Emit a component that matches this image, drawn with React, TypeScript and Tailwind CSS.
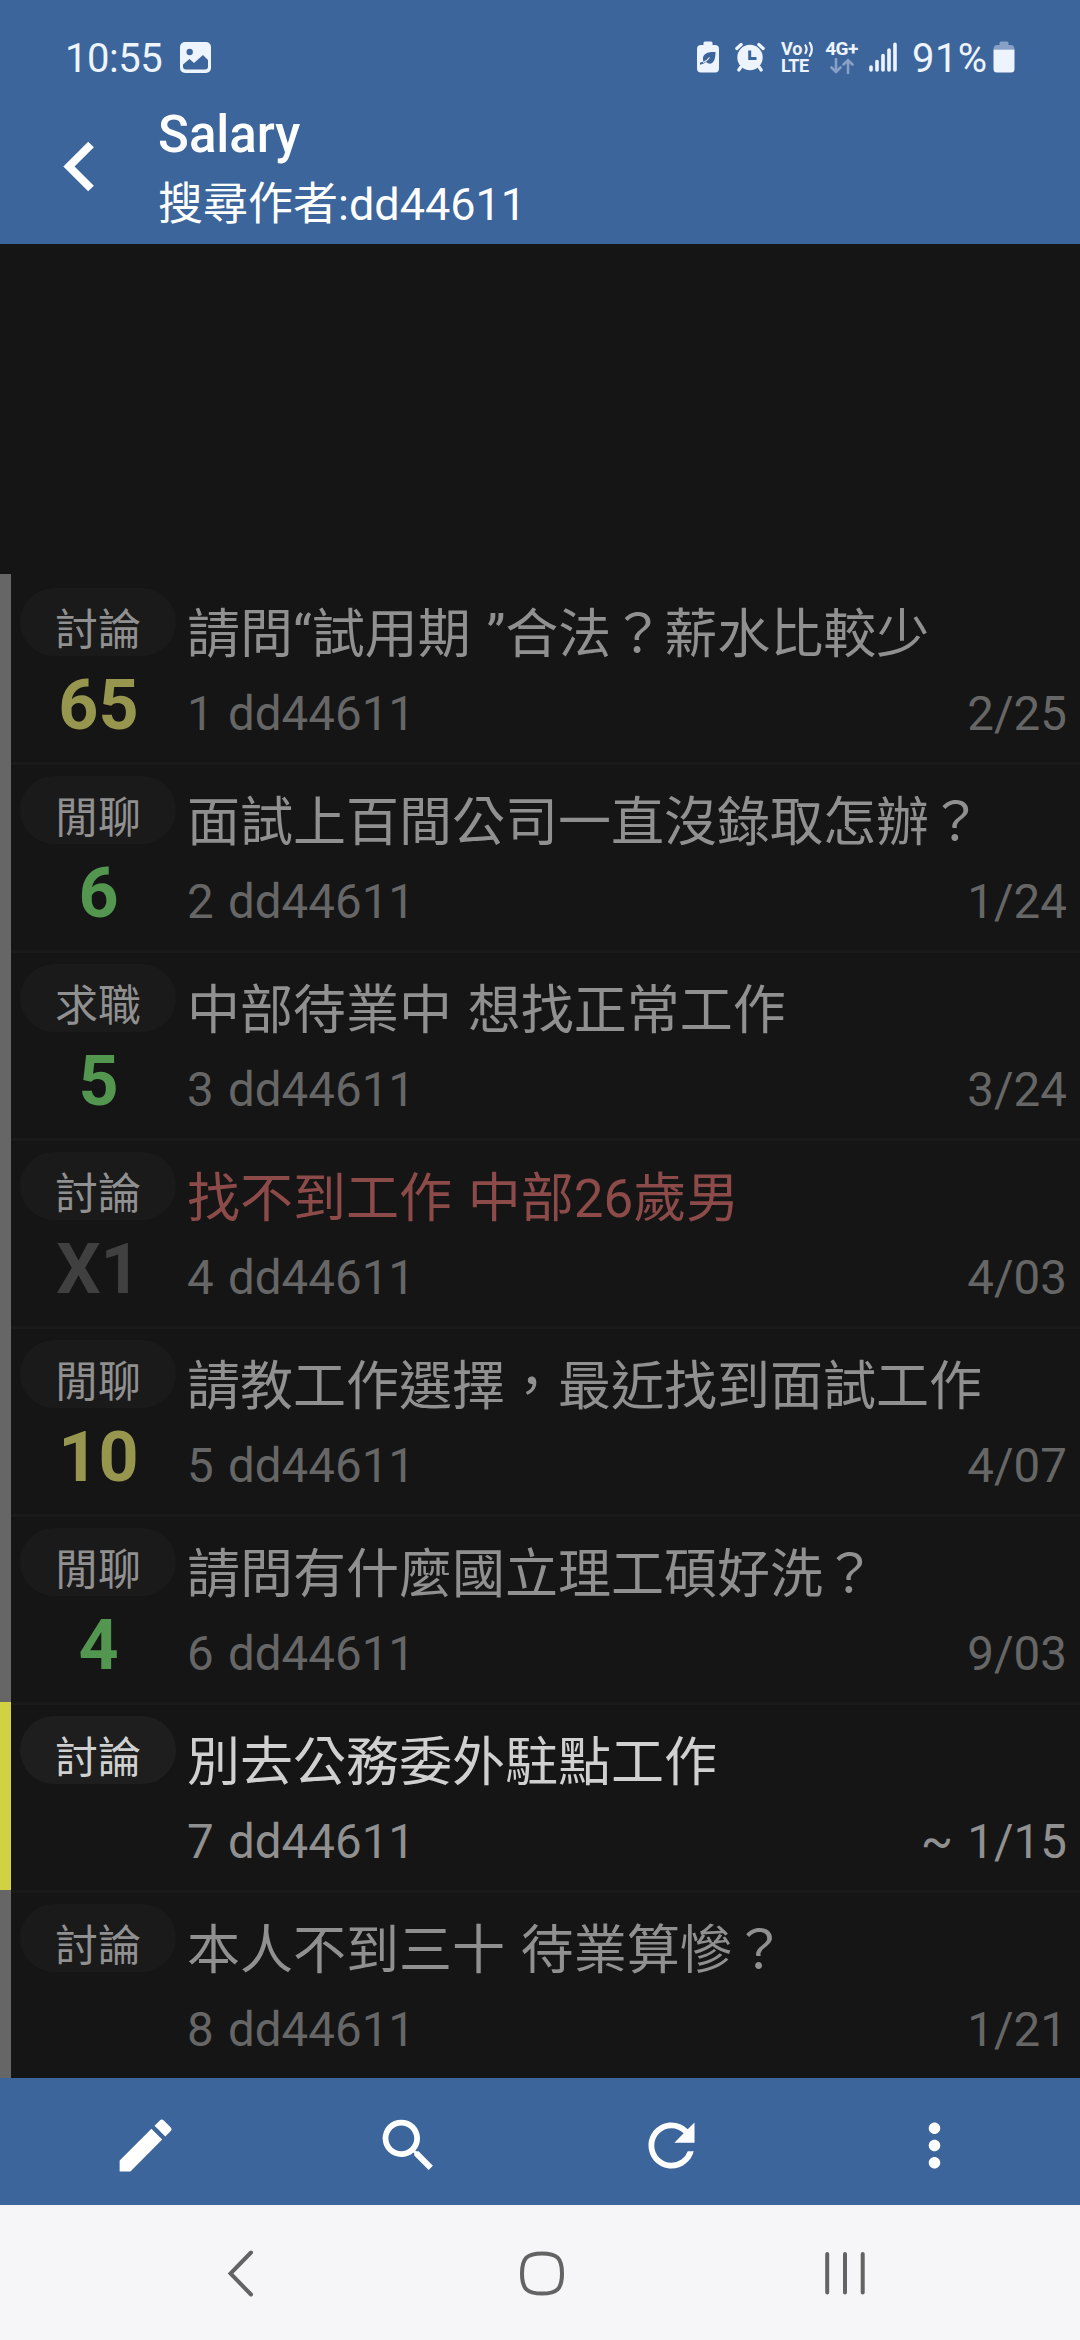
import { MdModeEdit, MdMoreVert, MdRefresh, MdSearch } from "react-icons/md";

type Post = {
  id: number;
  tag: string;
  title: string;
  date: string;
  score?: string;
  scoreClass?: string;
  titleClass?: string;
  active?: boolean;
};

const YELLOW = "text-[#96964f]";
const GREEN = "text-[#529650]";

const posts: Post[] = [
  { id: 1, tag: "討論", title: "請問“試用期 ”合法？薪水比較少", date: "2/25", score: "65", scoreClass: YELLOW },
  { id: 2, tag: "閒聊", title: "面試上百間公司一直沒錄取怎辦？", date: "1/24", score: "6", scoreClass: GREEN },
  { id: 3, tag: "求職", title: "中部待業中 想找正常工作", date: "3/24", score: "5", scoreClass: GREEN },
  { id: 4, tag: "討論", title: "找不到工作 中部26歲男", date: "4/03", score: "X1", scoreClass: "text-[#404040]", titleClass: "text-[#8c4a48]" },
  { id: 5, tag: "閒聊", title: "請教工作選擇，最近找到面試工作", date: "4/07", score: "10", scoreClass: YELLOW },
  { id: 6, tag: "閒聊", title: "請問有什麼國立理工碩好洗？", date: "9/03", score: "4", scoreClass: GREEN },
  { id: 7, tag: "討論", title: "別去公務委外駐點工作", date: "~ 1/15", active: true },
  { id: 8, tag: "討論", title: "本人不到三十 待業算慘？", date: "1/21" },
];

function StatusBar() {
  return (
    <div className="flex h-[114px] items-center pl-[65px] pr-[65px] text-[#eef4fd]">
      <span className="w-[115px] pt-[3px] text-[40px] leading-none tracking-[-0.5px]">10:55</span>
      <svg className="h-[31px] w-[31px]" viewBox="0 0 31 31">
        <rect width="31" height="31" rx="5" fill="currentColor" />
        <circle cx="9.7" cy="10" r="3.2" fill="#3c659b" />
        <path d="M3 22.5 9.5 17l4.5 4 9-8 5 5v6.5q0 3-3 3H6q-3 0-3-3z" fill="#3c659b" />
      </svg>
      <div className="ml-auto flex items-center">
        <svg className="h-[32px] w-[22px]" viewBox="0 0 22 32">
          <path d="M6.5 4V2q0-1.500 1.500-1.500h6q1.500 0 1.500 1.500v2H18q4 0 4 4v19.500q0 4-4 4H4q-4 0-4-4V8q0-4 4-4z" fill="currentColor" />
          <path d="M18.500 11C10 10.500 5.500 13 6 18.500q0 1 .6 1.800Q4.500 21.500 3 21.500v2.200q3.500-.2 6-2.600 4.500 3.500 7.500-.6Q18.500 17.500 18.500 11z" fill="#3c659b" />
          <path d="M6 21.500q4-1.500 6.500-5" stroke="#eef4fd" strokeWidth="1.200" fill="none" />
        </svg>
        <svg className="ml-[16px] h-[30px] w-[30px]" viewBox="0 0 30 30">
          <circle cx="15" cy="15.500" r="12.700" fill="currentColor" />
          <path d="M1.800 6.500 6.200 2.500M28.200 6.500 23.800 2.500M5.500 25.500 3.800 28M24.500 25.500 26.200 28" stroke="currentColor" strokeWidth="3.200" strokeLinecap="round" />
          <path d="M14.700 8.500v8h6.800" stroke="#3c659b" strokeWidth="3" fill="none" />
        </svg>
        <div className="ml-[16px] flex w-[33px] flex-col text-[18px] font-bold leading-[17px]">
          <span className="flex items-center">
            Vo
            <svg className="ml-px h-[16px] w-[10px]" viewBox="0 0 10 16">
              <path d="M1.500 4.500q2.200 3.500 0 7.500M5.800 1.800q4 6.200 0 13" stroke="currentColor" strokeWidth="2.200" fill="none" strokeLinecap="round" />
            </svg>
          </span>
          <span className="tracking-[-0.5px]">LTE</span>
        </div>
        <div className="ml-[10px] flex w-[35px] flex-col items-center">
          <span className="text-[19px] font-bold leading-[17px] tracking-[-0.5px]">4G+</span>
          <svg className="mt-px h-[16px] w-[24px]" viewBox="0 0 24 16">
            <path d="M6 1v13M1.500 9.500 6 14l4.500-4.500M18 15V2M13.500 6.500 18 2l4.500 4.500" stroke="#86a0c6" strokeWidth="2.600" fill="none" strokeLinecap="round" />
          </svg>
        </div>
        <svg className="ml-[10px] h-[30px] w-[28px]" viewBox="0 0 28 30">
          <path d="M2 25v3M8 19.500V28M14 13.500V28M20 8v20M26 2.200V28" stroke="currentColor" strokeWidth="3.600" strokeLinecap="round" />
        </svg>
        <span className="ml-[15px] w-[81px] pt-[3px] text-[40px] leading-none tracking-[0.4px]">91%</span>
        <svg className="h-[32px] w-[22px]" viewBox="0 0 22 32">
          <path d="M6.500 4V2q0-1.500 1.500-1.500h6q1.500 0 1.500 1.500v2H18q3.500 0 3.500 4.500H.5Q.5 4 4 4z" fill="#86a0c6" />
          <path d="M.5 8.500h21v19.500q0 3.500-3.500 3.500H4q-3.500 0-3.500-3.500z" fill="currentColor" />
        </svg>
      </div>
    </div>
  );
}

function TitleBar() {
  return (
    <div className="flex h-[130px] text-white">
      <div className="w-[158px] pl-[62px] pt-[27px]">
        <svg className="h-[51px] w-[33px]" viewBox="0 0 33 51">
          <path d="M29 3.500 7 25.500l22 22" stroke="currentColor" strokeWidth="8" fill="none" />
        </svg>
      </div>
      <div className="flex flex-col whitespace-nowrap">
        <h1 className="mt-[-9px] text-[51px] font-medium leading-[60px]">Salary</h1>
        <p className="mt-[10px] text-[45px] leading-[60px]">搜尋作者:dd44611</p>
      </div>
    </div>
  );
}

function PostRow({ post, first }: { post: Post; first: boolean }) {
  const { active } = post;
  return (
    <li className="flex h-[188px]">
      <div className={`w-[11px] shrink-0 ${active ? "bg-[#d0d243]" : "bg-[#666666]"}`} />
      <div className={`flex min-w-0 flex-1 border-t-[3px] ${first ? "border-transparent" : "border-[#1a1a1a]"}`}>
        <div className="ml-[9px] mt-[11px] flex w-[156px] shrink-0 flex-col items-center">
          <span
            className={`flex h-[68px] w-full items-center justify-center rounded-full pt-[17px] text-[43px] leading-none ${
              active ? "bg-[#1e1e1e] text-[#d0d0d0]" : "bg-[#1a1a1a] text-[#909090]"
            }`}
          >
            {post.tag}
          </span>
          {post.score && (
            <span className={`mt-[14px] pl-px text-[70px] font-bold leading-[70px] ${post.scoreClass}`}>{post.score}</span>
          )}
        </div>
        <div className="ml-[11px] flex min-w-0 flex-1 flex-col whitespace-nowrap pr-[13px] [word-spacing:2.5px]">
          <h2
            className={`mt-[23px] text-[53px] leading-[70px] ${
              active ? "text-[#d0d0d0]" : post.titleClass ?? "text-[#909090]"
            }`}
          >
            {post.title}
          </h2>
          <div
            className={`mt-[16px] flex justify-between text-[47.500px] leading-[56px] ${
              active ? "text-[#909090]" : "text-[#666666]"
            }`}
          >
            <span>{post.id} dd44611</span>
            <span>{post.date}</span>
          </div>
        </div>
      </div>
    </li>
  );
}

function Toolbar() {
  return (
    <div className="grid h-[127px] grid-cols-4 items-center justify-items-center px-[14px] pt-[7px] text-[69px] text-white bg-[#3c659b]">
      <MdModeEdit />
      <MdSearch />
      <MdRefresh />
      <MdMoreVert />
    </div>
  );
}

function NavigationBar() {
  return (
    <div className="flex h-[135px] items-center bg-[#f6f6f8] pl-[226px] text-[#636363]">
      <svg className="h-[48px] w-[30px]" viewBox="0 0 30 48" fill="none" stroke="currentColor" strokeWidth="4">
        <path d="M25 3.500 4.500 24.500 25 45.500" strokeLinecap="round" />
      </svg>
      <svg className="ml-[262px] h-[48px] w-[48px]" viewBox="0 0 48 48" fill="none" stroke="currentColor" strokeWidth="4">
        <path d="M24 4.500c15 0 20 4.500 20 20s-5 20-20 20-20-4.500-20-20 5-20 20-20z" />
      </svg>
      <svg className="ml-[257px] h-[48px] w-[44px]" viewBox="0 0 44 48" fill="none" stroke="currentColor" strokeWidth="4">
        <path d="M4.200 5v38.500M22 5v38.500M39.700 5v38.500" strokeLinecap="round" />
      </svg>
    </div>
  );
}

export default function App() {
  return (
    <div
      lang="zh-Hant"
      className="flex h-[2340px] w-[1080px] flex-col overflow-hidden bg-[#151515] font-[Roboto,'Noto_Sans_CJK_TC',sans-serif]"
    >
      <header className="h-[244px] shrink-0 bg-[#3c659b]">
        <StatusBar />
        <TitleBar />
      </header>
      <main className="flex flex-1 flex-col justify-end">
        <ul>
          {posts.map((post, i) => (
            <PostRow key={post.id} post={post} first={i === 0} />
          ))}
        </ul>
      </main>
      <Toolbar />
      <NavigationBar />
    </div>
  );
}
